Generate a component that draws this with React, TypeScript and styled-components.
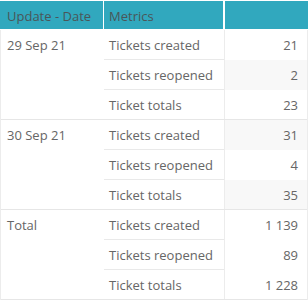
import React from 'react';
import styled, { createGlobalStyle } from 'styled-components';

const GlobalStyle = createGlobalStyle`
  html, body {
    margin: 0;
    padding: 0;
    background: #ffffff;
  }
  body {
    font-family: "Open Sans", "Noto Sans", Arial, sans-serif;
  }
  * {
    box-sizing: border-box;
  }
`;

const Matrix = styled.div`
  width: 308px;
  color: #666666;
  font-size: 13px;
`;

const HeaderRow = styled.div`
  display: grid;
  grid-template-columns: 104px 121px 83px;
  border-top: 1px solid #ffffff;
  border-bottom: 1px solid #ffffff;
`;

const HeaderCell = styled.div<{ $gap: number; $indent: number }>`
  height: 28px;
  background: #31a8be;
  border-right: ${p => p.$gap}px solid #ffffff;
  color: #4a5659;
  font-size: 13px;
  line-height: 30px;
  padding-left: ${p => p.$indent}px;
  white-space: nowrap;
  overflow: hidden;
`;

const Body = styled.div`
  border-left: 1px solid #ececec;
  border-right: 1px solid #ececec;
`;

const Group = styled.div`
  display: grid;
  grid-template-columns: 103px 120px 83px;
  grid-template-rows: 30px 30px 29px;
  border-bottom: 1px solid #e6e6e6;
`;

const DateCell = styled.div`
  grid-row: 1 / span 3;
  grid-column: 1;
  padding-left: 6px;
  line-height: 31px;
  white-space: nowrap;
`;

const MetricCell = styled.div<{ $row: number }>`
  grid-column: 2;
  grid-row: ${p => p.$row};
  padding-left: 5px;
  line-height: 31px;
  white-space: nowrap;
  border-bottom: ${p => (p.$row < 3 ? '1px solid #e9e9e9' : 'none')};
`;

const ValueCell = styled.div<{ $row: number; $shaded: boolean }>`
  grid-column: 3;
  grid-row: ${p => p.$row};
  text-align: right;
  padding-right: 9px;
  line-height: 31px;
  border-left: 1px solid #ececec;
  background: ${p => (p.$shaded ? '#f8f8f8' : '#ffffff')};
`;

const metrics = ['Tickets created', 'Tickets reopened', 'Ticket totals'];

const groups = [
  { label: '29 Sep 21', values: ['21', '2', '23'], banded: true },
  { label: '30 Sep 21', values: ['31', '4', '35'], banded: true },
  { label: 'Total', values: ['1 139', '89', '1 228'], banded: false },
];

export default function App(): JSX.Element {
  let rowIndex = 0;
  return (
    <Matrix>
      <GlobalStyle />
      <HeaderRow>
        <HeaderCell $gap={1} $indent={7}>Update - Date</HeaderCell>
        <HeaderCell $gap={2} $indent={5}>Metrics</HeaderCell>
        <HeaderCell $gap={0} $indent={0} />
      </HeaderRow>
      <Body>
        {groups.map(group => (
          <Group key={group.label}>
            <DateCell>{group.label}</DateCell>
            {metrics.map((metric, i) => {
              const shaded = group.banded && rowIndex++ % 2 === 1;
              return (
                <React.Fragment key={metric}>
                  <MetricCell $row={i + 1}>{metric}</MetricCell>
                  <ValueCell $row={i + 1} $shaded={shaded}>
                    {group.values[i]}
                  </ValueCell>
                </React.Fragment>
              );
            })}
          </Group>
        ))}
      </Body>
    </Matrix>
  );
}
